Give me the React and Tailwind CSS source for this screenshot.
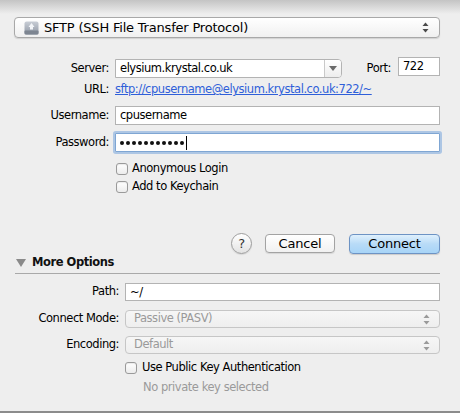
import React from "react";

const Updown = ({ color = "#4a4a4a" }) => (
  <svg width="7" height="11" viewBox="0 0 7 11">
    <path d="M3.5 0.5 L6.5 4 L0.5 4 Z" fill={color} />
    <path d="M3.5 10.5 L6.5 7 L0.5 7 Z" fill={color} />
  </svg>
);

function Checkbox() {
  return (
    <span className="inline-block w-[12px] h-[12px] rounded-[3px] border border-[#9a9a9a] bg-gradient-to-b from-white to-[#ececec] shadow-[inset_0_1px_1px_rgba(0,0,0,0.08)]" />
  );
}

const dots = Array.from({ length: 11 });

export default function App() {
  return (
    <div className="relative w-[460px] h-[413px] overflow-hidden bg-[#eeeeee] text-[11.5px] tracking-[-0.45px] text-[#1a1a1a] font-['Lucida_Grande','DejaVu_Sans',sans-serif]">
      {/* sheet top shadow */}
      <div className="absolute top-0 left-0 right-0 h-[14px] bg-gradient-to-b from-[#c4c4c4] to-transparent pointer-events-none" />

      <div className="flex flex-col pl-[14px] pr-[20px] pt-[17px]">
        {/* protocol popup */}
        <div className="flex items-center h-[21px] rounded-[4px] border border-[#a8a8a8] bg-gradient-to-b from-white to-[#f0f0f0] shadow-[0_1px_1px_rgba(0,0,0,0.12)] pl-[9px] pr-[10px]">
          <svg width="15" height="14" viewBox="0 0 15 14" className="mr-[5px]">
            <defs>
              <linearGradient id="dr" x1="0" y1="0" x2="0" y2="1">
                <stop offset="0" stopColor="#c9ced6" />
                <stop offset="1" stopColor="#8e96a3" />
              </linearGradient>
            </defs>
            <rect x="0.5" y="0.5" width="14" height="13" rx="2" fill="url(#dr)" />
            <rect x="0.5" y="9.5" width="14" height="4" rx="1" fill="#7d8591" />
            <path d="M7.5 2 L10.5 6 L9 6 L9 8.5 L6 8.5 L6 6 L4.5 6 Z" fill="#f4f6f9" />
          </svg>
          <span className="flex-1 text-[13px] tracking-[-0.2px] text-black">SFTP (SSH File Transfer Protocol)</span>
          <Updown />
        </div>

        {/* server row */}
        <div className="flex items-center mt-[21px] h-[19px]">
          <span className="w-[95px] text-right text-black">Server:</span>
          <div className="ml-[6px] flex items-stretch w-[227px] h-[19px] border border-[#b3b3b3] bg-white rounded-r-[4px]">
            <span className="flex-1 pl-[4px] leading-[17px] text-black">elysium.krystal.co.uk</span>
            <span className="w-[17px] border-l border-[#c9c9c9] bg-gradient-to-b from-white to-[#ededed] flex items-center justify-center rounded-r-[3px]">
              <svg width="8" height="5" viewBox="0 0 8 5"><path d="M0 0 L8 0 L4 5 Z" fill="#6a6a6a" /></svg>
            </span>
          </div>
          <span className="flex-1" />
          <span className="mr-[7px] text-black">Port:</span>
          <div className="w-[42px] h-[19px] -mt-[4px] border border-[#b3b3b3] bg-white pl-[4px] leading-[17px] text-black">722</div>
        </div>

        {/* URL */}
        <div className="flex items-center mt-[3px] h-[18px]">
          <span className="w-[95px] text-right text-black">URL:</span>
          <a className="ml-[6px] text-[#2f5fd9] underline underline-offset-[1px]">sftp://cpusername@elysium.krystal.co.uk:722/~</a>
        </div>

        {/* Username */}
        <div className="flex items-center mt-[7px] h-[19px]">
          <span className="w-[95px] text-right text-black">Username:</span>
          <div className="ml-[6px] flex-1 h-[19px] border border-[#b3b3b3] bg-white pl-[4px] leading-[17px] text-black">cpusername</div>
        </div>

        {/* Password */}
        <div className="flex items-center mt-[8px] h-[19px]">
          <span className="w-[95px] text-right text-black">Password:</span>
          <div className="ml-[6px] flex-1 h-[19px] border border-[#7fa6d3] bg-white pl-[4px] flex items-center shadow-[0_0_0_2px_rgba(120,165,220,0.55)] rounded-[1px]">
            <span className="flex items-center gap-[2px]">
              {dots.map((_, i) => (
                <span key={i} className="w-[4px] h-[4px] rounded-full bg-[#111]" />
              ))}
            </span>
            <span className="w-[1px] h-[14px] bg-black ml-[2px]" />
          </div>
        </div>

        {/* checkboxes */}
        <div className="flex flex-col pl-[102px] mt-[10px] gap-[5px]">
          <label className="flex items-center gap-[4px] h-[13px]">
            <Checkbox />
            <span className="text-black">Anonymous Login</span>
          </label>
          <label className="flex items-center gap-[4px] h-[13px]">
            <Checkbox />
            <span className="text-black">Add to Keychain</span>
          </label>
        </div>

        {/* buttons */}
        <div className="flex items-center justify-end mt-[40px] h-[21px]">
          <span className="w-[21px] h-[21px] rounded-full border border-[#9d9d9d] bg-gradient-to-b from-white to-[#e3e3e3] flex items-center justify-center text-[13px] text-[#333] shadow-[0_1px_1px_rgba(0,0,0,0.1)]">?</span>
          <button className="ml-[13px] w-[70px] h-[19px] rounded-[4px] border border-[#a3a3a3] bg-gradient-to-b from-white to-[#f1f1f1] text-[13px] tracking-[-0.2px] text-black leading-[17px] shadow-[0_1px_1px_rgba(0,0,0,0.1)]">Cancel</button>
          <button className="ml-[14px] w-[91px] h-[20px] rounded-[4px] border border-[#6d93c4] bg-gradient-to-b from-[#dff0fc] via-[#b8dbf7] to-[#a7d4f7] text-[13px] tracking-[-0.2px] text-black leading-[18px] shadow-[0_1px_1px_rgba(0,0,0,0.15)]">Connect</button>
        </div>

        {/* More options */}
        <div className="flex items-center mt-[1px] h-[16px] pl-[2px]">
          <svg width="10" height="8" viewBox="0 0 10 8"><path d="M0 0 L10 0 L5 8 Z" fill="#8a8a8a" /></svg>
          <span className="ml-[6px] font-bold text-[#111]">More Options</span>
        </div>
        <div className="mt-[2px] ml-[1px] h-[1px] bg-[#a9a9a9]" />

        {/* path */}
        <div className="flex items-center mt-[9px] h-[18px]">
          <span className="w-[105px] text-right text-black">Path:</span>
          <div className="ml-[6px] flex-1 h-[18px] border border-[#b3b3b3] bg-white pl-[4px] leading-[16px] text-black">~/</div>
        </div>

        {/* connect mode */}
        <div className="flex items-center mt-[9px] h-[18px]">
          <span className="w-[105px] text-right text-black">Connect Mode:</span>
          <div className="ml-[6px] flex-1 h-[18px] flex items-center rounded-[4px] border border-[#c6c6c6] bg-gradient-to-b from-[#f6f6f6] to-[#eeeeee] pl-[8px] pr-[9px]">
            <span className="flex-1 text-[#9a9a9a]">Passive (PASV)</span>
            <Updown color="#9a9a9a" />
          </div>
        </div>

        {/* encoding */}
        <div className="flex items-center mt-[8px] h-[18px]">
          <span className="w-[105px] text-right text-black">Encoding:</span>
          <div className="ml-[6px] flex-1 h-[18px] flex items-center rounded-[4px] border border-[#c6c6c6] bg-gradient-to-b from-[#f6f6f6] to-[#eeeeee] pl-[8px] pr-[9px]">
            <span className="flex-1 text-[#9a9a9a]">Default</span>
            <Updown color="#9a9a9a" />
          </div>
        </div>

        {/* public key */}
        <label className="flex items-center gap-[5px] mt-[7px] h-[14px] pl-[111px]">
          <Checkbox />
          <span className="text-black">Use Public Key Authentication</span>
        </label>
        <div className="mt-[4px] pl-[129px] text-[#9a9a9a]">No private key selected</div>
      </div>

      {/* bottom edge */}
      <div className="absolute bottom-0 left-0 right-0 h-[2px] bg-[#8c8c8c]" />
    </div>
  );
}
